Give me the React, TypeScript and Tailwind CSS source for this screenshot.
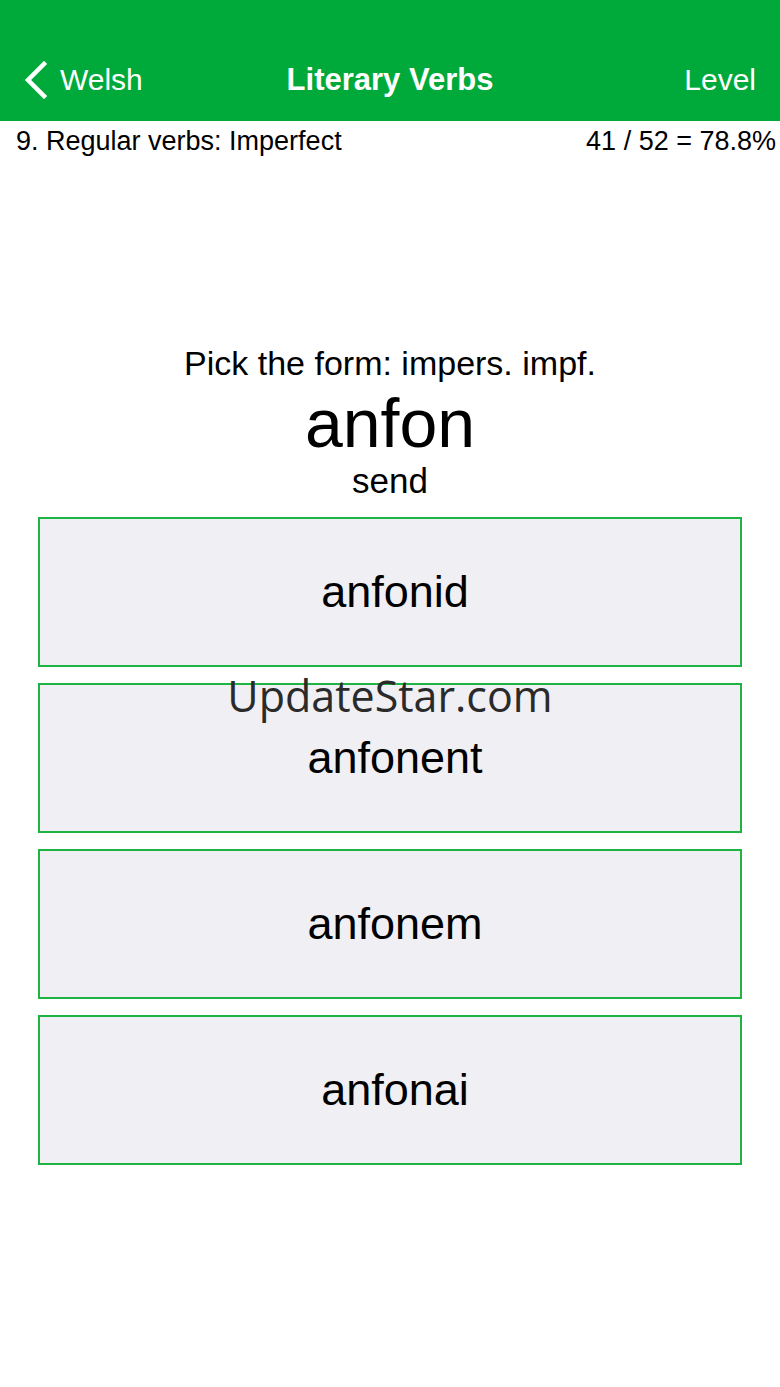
import React from 'react';

const choices = ['anfonid', 'anfonent', 'anfonem', 'anfonai'];

export default function App() {
  return (
    <div
      className="relative min-h-[1387px] w-[780px] bg-white text-black"
      style={{ fontFamily: '"Liberation Sans", Arial, sans-serif' }}
    >
      {/* Nav bar */}
      <div className="flex h-[121px] items-center bg-[#00aa3a] px-[24px] pt-[38px] text-white">
        <div className="flex w-[200px] items-center gap-[12px]">
          <svg width="24" height="38" viewBox="0 0 24 38" fill="none">
            <path d="M20 3 L4 19 L20 35" stroke="white" strokeWidth="4.5" strokeLinecap="square" />
          </svg>
          <span className="text-[30px] leading-none">Welsh</span>
        </div>
        <div className="flex-1 text-center text-[31px] font-bold leading-none">Literary Verbs</div>
        <div className="w-[200px] text-right text-[30px] leading-none">Level</div>
      </div>

      {/* Subheader */}
      <div className="flex items-center justify-between pl-[16px] pr-[4px] pt-[4px] text-[27px] leading-[32px]">
        <span>9. Regular verbs: Imperfect</span>
        <span>41 / 52 = 78.8%</span>
      </div>

      {/* Prompt */}
      <div className="mt-[186px] flex flex-col items-center">
        <div className="text-[34px] leading-[40px]">Pick the form: impers. impf.</div>
        <div className="text-[68px] leading-[80px]">anfon</div>
        <div className="text-[35px] leading-[36px]">send</div>
      </div>

      {/* Choices */}
      <div className="mt-[18px] flex flex-col gap-[16px] pl-[38px] pr-[38px]">
        {choices.map((c) => (
          <button
            key={c}
            className="flex h-[150px] w-full items-center justify-center border-2 border-[#1fb344] bg-[#efeff4] pl-[10px] text-[45px]"
          >
            {c}
          </button>
        ))}
      </div>

      {/* Watermark */}
      <div
        className="pointer-events-none absolute left-0 right-0 top-[671px] text-center text-[43px] leading-[50px] text-[#2a2a2a]"
        style={{ fontFamily: '"Open Sans", "DejaVu Sans", sans-serif' }}
      >
        UpdateStar.com
      </div>
    </div>
  );
}
